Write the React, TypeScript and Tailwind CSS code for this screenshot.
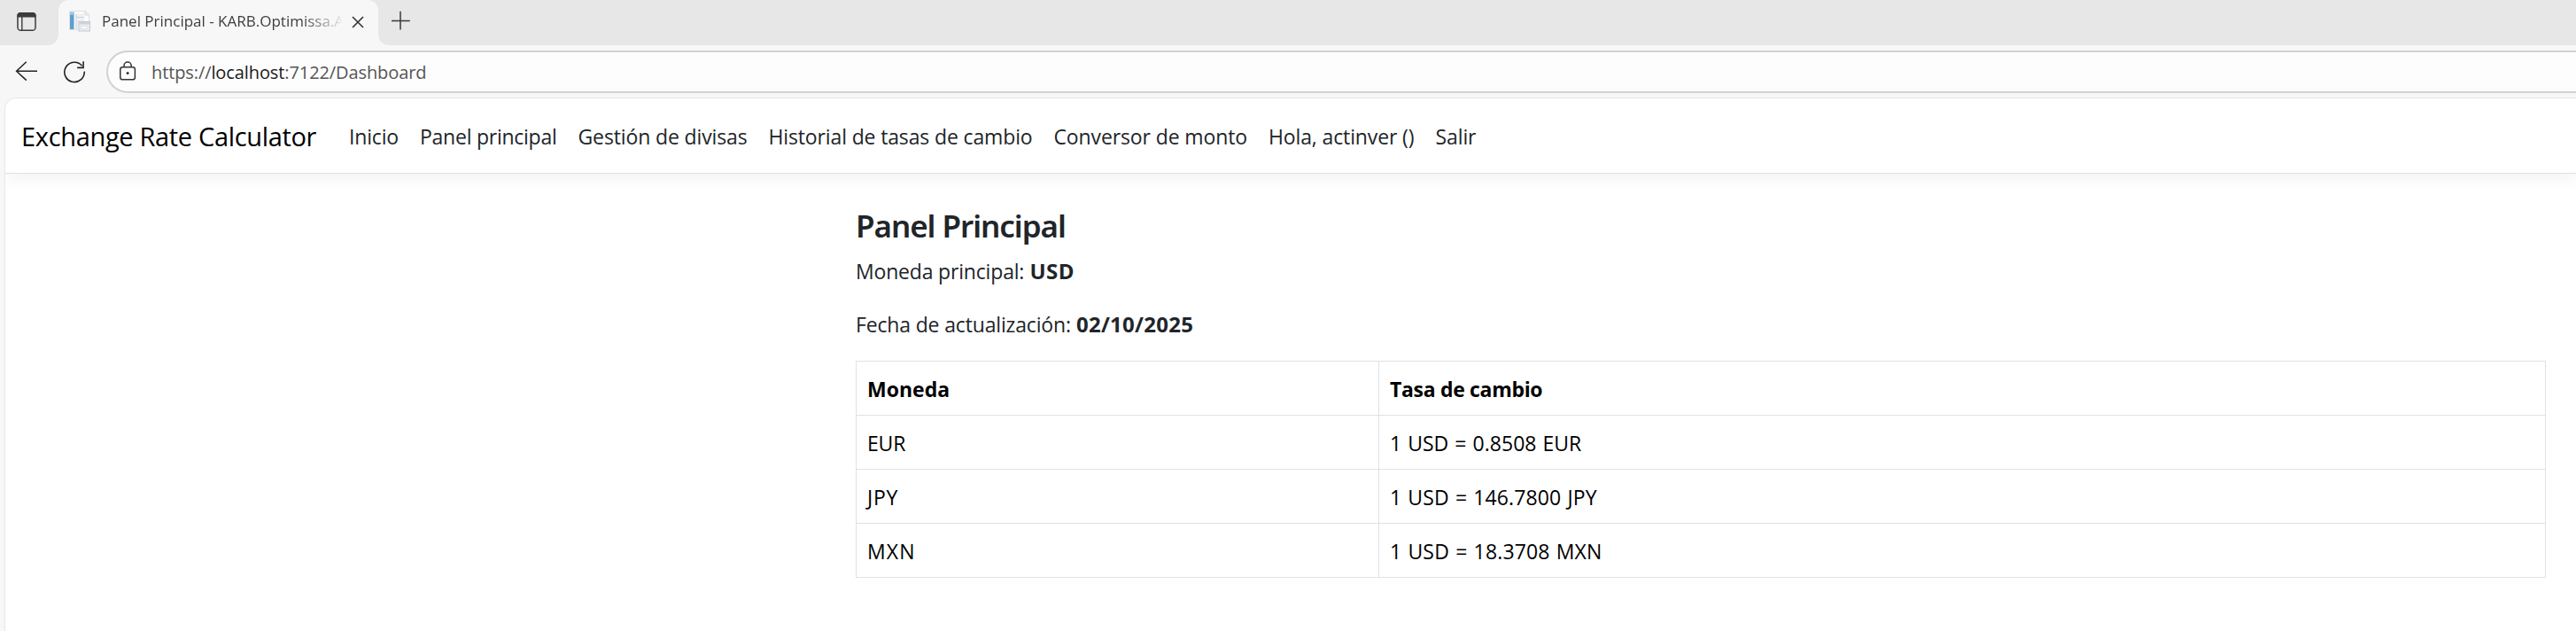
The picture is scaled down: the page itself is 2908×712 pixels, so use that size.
const navItems = [
  { label: "Inicio", className: "w-[56px] tracking-[-0.17px]" },
  { label: "Panel principal", className: "w-[154.5px] tracking-[-0.25px]" },
  { label: "Gestión de divisas", className: "w-[191px] tracking-[-0.13px]" },
  { label: "Historial de tasas de cambio", className: "w-[298px] tracking-[-0.14px]" },
  { label: "Conversor de monto", className: "w-[218.5px] tracking-[-0.12px]" },
  { label: "Hola, actinver ()", className: "w-[164.5px] tracking-[-0.13px]" },
  { label: "Salir", className: "w-[48px] tracking-[-0.1px]" },
];

const rates = [
  { code: "EUR", value: "1 USD = 0.8508 EUR", codeClass: "tracking-[-0.2px]", valueClass: "tracking-[0.03px] [word-spacing:1px]" },
  { code: "JPY", value: "1 USD = 146.7800 JPY", codeClass: "tracking-[0.8px]", valueClass: "tracking-[0.12px] [word-spacing:1px]" },
  { code: "MXN", value: "1 USD = 18.3708 MXN", codeClass: "tracking-[1.1px]", valueClass: "tracking-[0.16px] [word-spacing:1px]" },
];

function TabActionsIcon() {
  return (
    <svg width="24" height="24" viewBox="0 0 24 24" fill="none">
      <rect x="2" y="2.7" width="20" height="19.6" rx="3.4" stroke="#3b3b3b" strokeWidth="1.5" />
      <path d="M1.4 7.6V5.6A3.6 3.6 0 0 1 5 2h14a3.6 3.6 0 0 1 3.6 3.6v2z" fill="#3b3b3b" />
      <path d="M6.8 7v15" stroke="#3b3b3b" strokeWidth="1.4" />
    </svg>
  );
}

function Favicon() {
  return (
    <svg width="26" height="26" viewBox="0 0 26 26" fill="none">
      <path d="M1.5 1.5h18l4 4v17h-22z" fill="#fafafa" stroke="#dfe1e4" />
      <path d="M19 1.5v4.5h4.5" fill="#eceef0" stroke="#d6d9dc" />
      <rect x="2" y="3" width="4.5" height="19" fill="#5c9fd0" />
      <rect x="2" y="2.5" width="4.5" height="3.5" fill="#97c2e0" />
      <rect x="9" y="5" width="9" height="16" fill="#edf1f4" />
      <path d="M9 5v17M9 8.5h9" stroke="#ccd2d8" />
      <rect x="12" y="13.5" width="12.5" height="10.5" fill="#eceff5" stroke="#c4c8d0" />
      <rect x="12.5" y="14" width="11.5" height="2.5" fill="#ced2dc" />
      <rect x="14.5" y="18.5" width="7.5" height="3" fill="#fff" stroke="#cfd3dc" strokeWidth="0.7" />
    </svg>
  );
}

function TabStrip() {
  return (
    <div className="flex h-[51px] bg-[#e7e7e7]">
      <div className="flex w-[66px] bg-[#f7f7f7]">
        <div className="flex w-full rounded-br-[12px] bg-[#e7e7e7] pt-[12px] pl-[18px]">
          <TabActionsIcon />
        </div>
      </div>
      <div className="flex w-[361px] rounded-t-[12px] bg-[#f7f7f7] pl-[11px]">
        <div className="pt-[11px]">
          <Favicon />
        </div>
        <div className="mt-[10px] ml-[12px] h-[27px] w-[270px] overflow-hidden text-[17px] leading-[27px] whitespace-nowrap text-[#3d3d3d] [mask-image:linear-gradient(to_right,#000_225px,transparent_274px)]">
          Panel Principal - KARB.Optimissa.A
        </div>
        <svg className="mt-[18px] ml-[12px]" width="14" height="14" viewBox="0 0 14 14" fill="none">
          <path d="M1 1l12 12M13 1L1 13" stroke="#333" strokeWidth="1.6" />
        </svg>
      </div>
      <div className="flex flex-1 bg-[#f7f7f7]">
        <div className="flex w-full rounded-bl-[12px] bg-[#e7e7e7] pt-[12px] pl-[14px]">
          <svg width="22" height="22" viewBox="0 0 22 22" fill="none">
            <path d="M11 .8v20.8M1 11.4h20.8" stroke="#3b3b3b" strokeWidth="1.5" />
          </svg>
        </div>
      </div>
    </div>
  );
}

function AddressBar() {
  return (
    <div className="flex h-[59px] bg-[#f7f7f7] pt-[6px]">
      <svg className="mt-[11px] ml-[17px]" width="26" height="24" viewBox="0 0 26 24" fill="none">
        <path d="M25 12.2H1.6M12.8 1.8L1.6 12.2l11.2 10.4" stroke="#242424" strokeWidth="1.5" />
      </svg>
      <svg className="mt-[11px] ml-[28px]" width="26" height="26" viewBox="0 0 26 26" fill="none">
        <path d="M24.2 12.6A11.2 11.2 0 1 1 21.6 6.2M23.1 1.2v7.2h-7" stroke="#242424" strokeWidth="1.6" />
      </svg>
      <div className="ml-[23px] flex h-[48px] flex-1 rounded-l-full border-y-2 border-l-2 border-[#d2d2d2] bg-[#fdfdfd]">
        <svg className="mt-[10px] ml-[12px]" width="20" height="22" viewBox="0 0 20 22" fill="none">
          <rect x="1.8" y="6.8" width="16.6" height="14" rx="2.6" stroke="#333" strokeWidth="1.5" />
          <path d="M6 6.8V5.2a4.1 4.1 0 0 1 8.2 0v1.6" stroke="#333" strokeWidth="1.5" />
          <circle cx="10.1" cy="13.6" r="1.5" fill="#333" />
        </svg>
        <div className="mt-[9px] ml-[17px] text-[20px] leading-[28px] tracking-[-0.1px] whitespace-nowrap text-[#555]">
          https://<span className="text-[#191919]">localhost</span>:7122/Dashboard
        </div>
      </div>
    </div>
  );
}

function Navbar() {
  return (
    <header className="flex h-[85px] items-center rounded-tl-[12px] border-b border-[#dee2e6] bg-white pl-[18px] shadow-[0_6px_18px_rgba(0,0,0,0.05)]">
      <a className="w-[370px] pt-[2px] text-[29px] leading-[44px] tracking-[-0.33px] whitespace-nowrap text-black">
        Exchange Rate Calculator
      </a>
      <nav className="flex gap-[24px] pt-[2px] text-[23px] leading-[36px] whitespace-nowrap text-[#212529]">
        {navItems.map((item) => (
          <a key={item.label} className={item.className}>
            {item.label}
          </a>
        ))}
      </nav>
    </header>
  );
}

function Dashboard() {
  return (
    <main className="ml-[960px] w-[1908px] pt-[37px] text-[23px] leading-[36px] text-[#212529]">
      <h1 className="mb-[11px] font-['Noto_Sans',sans-serif] text-[35px] leading-[44px] font-semibold tracking-[-1.05px]">
        Panel Principal
      </h1>
      <p className="mb-[24px] flex">
        <span className="w-[196.5px] tracking-[-0.18px] whitespace-nowrap">Moneda principal:</span>
        <b className="text-[24px] tracking-[0.4px]">USD</b>
      </p>
      <p className="mb-[23px] flex">
        <span className="w-[249px] tracking-[-0.16px] whitespace-nowrap">Fecha de actualización:</span>
        <b className="text-[24px] tracking-[0.25px]">02/10/2025</b>
      </p>
      <table className="w-[1908px] table-fixed border-separate border-spacing-0 border-t border-l border-[#dee2e6] text-left text-black">
        <thead>
          <tr className="h-[61px]">
            <th className="w-[590px] border-r border-b border-[#dee2e6] p-0 pt-[2px] pl-[12px]">Moneda</th>
            <th className="border-r border-b border-[#dee2e6] p-0 pt-[2px] pl-[12px] tracking-[-0.32px]">Tasa de cambio</th>
          </tr>
        </thead>
        <tbody>
          {rates.map((rate) => (
            <tr key={rate.code} className="h-[61px]">
              <td className="border-r border-b border-[#dee2e6] p-0 pt-[2px] pl-[12px]">
                <span className={rate.codeClass}>{rate.code}</span>
              </td>
              <td className="border-r border-b border-[#dee2e6] p-0 pt-[2px] pl-[12px]">
                <span className={rate.valueClass}>{rate.value}</span>
              </td>
            </tr>
          ))}
        </tbody>
      </table>
    </main>
  );
}

export default function App() {
  return (
    <div className="h-[712px] w-[2908px] overflow-hidden bg-[#f7f7f7] font-['Open_Sans','Noto_Sans',sans-serif]">
      <TabStrip />
      <AddressBar />
      <div className="pl-[5px]">
        <div className="h-[602px] overflow-hidden rounded-tl-[13px] border-t border-l border-[#e6e6e6] bg-white">
          <Navbar />
          <Dashboard />
        </div>
      </div>
    </div>
  );
}
